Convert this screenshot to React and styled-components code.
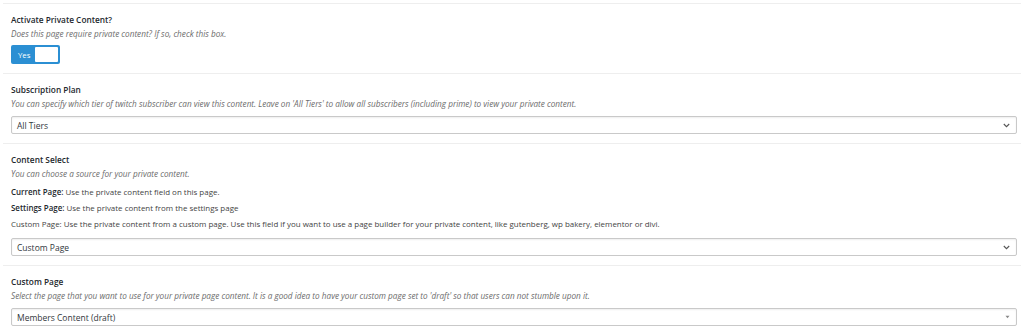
import styled, { createGlobalStyle } from "styled-components";

const GlobalStyle = createGlobalStyle`
  body {
    margin: 0;
    background: #fff;
    font-family: "Open Sans", "Liberation Sans", sans-serif;
    color: #444;
  }
`;

const Panel = styled.div`
  margin: 3px 3px 0;
  border-top: 1px solid #eee;
`;

const Section = styled.div`
  padding: 10px 4px 9px 8px;
  border-bottom: 1px solid #eee;
  display: flex;
  flex-direction: column;
`;

const Heading = styled.h4`
  margin: 0;
  font-size: 8.3px;
  line-height: 11px;
  font-weight: 600;
  color: #23282d;
`;

const Description = styled.p`
  margin: 3px 0 0;
  font-size: 8.2px;
  line-height: 11px;
  font-style: italic;
  color: #6c6c6c;
`;

const Line = styled.p`
  margin: ${({ first }) => (first ? "8px" : "5px")} 0 0;
  font-size: 7.95px;
  line-height: 11px;
  color: #444;

  b {
    font-weight: 600;
    color: #23282d;
  }
`;

const Toggle = styled.div`
  margin-top: 6px;
  width: 49px;
  height: 19px;
  box-sizing: border-box;
  padding: 2px;
  border-radius: 2px;
  background: #2b8fd3;
  display: flex;
  align-items: center;
  justify-content: space-between;
`;

const ToggleLabel = styled.span`
  padding-left: 5px;
  font-size: 7.8px;
  color: #fff;
`;

const Knob = styled.span`
  width: 23px;
  height: 15px;
  border-radius: 1px;
  background: #fff;
`;

const SelectBox = styled.div`
  margin-top: ${({ gap }) => gap || 7}px;
  height: 18px;
  box-sizing: border-box;
  border: 1px solid #c9c9c9;
  border-radius: 2px;
  box-shadow: inset 0 1px 2px rgba(0, 0, 0, 0.07);
  padding: 0 6px 0 5px;
  display: flex;
  align-items: center;
  justify-content: space-between;
  font-size: 8.5px;
  color: #32373c;
`;

const Chevron = () => (
  <svg width="7" height="5" viewBox="0 0 7 5">
    <path d="M0.8 1 L3.5 3.7 L6.2 1" fill="none" stroke="#555" strokeWidth="1.1" />
  </svg>
);

const Caret = () => (
  <svg width="5" height="4" viewBox="0 0 5 4">
    <path d="M0.5 0.8 H4.5 L2.5 3.2 Z" fill="#888" />
  </svg>
);

export default function App() {
  return (
    <>
      <GlobalStyle />
      <Panel>
        <Section>
          <Heading>Activate Private Content?</Heading>
          <Description>Does this page require private content? If so, check this box.</Description>
          <Toggle>
            <ToggleLabel>Yes</ToggleLabel>
            <Knob />
          </Toggle>
        </Section>

        <Section>
          <Heading>Subscription Plan</Heading>
          <Description>
            You can specify which tier of twitch subscriber can view this content. Leave on 'All Tiers' to
            allow all subscribers (including prime) to view your private content.
          </Description>
          <SelectBox>
            <span>All Tiers</span>
            <Chevron />
          </SelectBox>
        </Section>

        <Section>
          <Heading>Content Select</Heading>
          <Description>You can choose a source for your private content.</Description>
          <Line first>
            <b>Current Page:</b> Use the private content field on this page.
          </Line>
          <Line>
            <b>Settings Page:</b> Use the private content from the settings page
          </Line>
          <Line>
            Custom Page: Use the private content from a custom page. Use this field if you want to use a page
            builder for your private content, like gutenberg, wp bakery, elementor or divi.
          </Line>
          <SelectBox gap={8}>
            <span>Custom Page</span>
            <Chevron />
          </SelectBox>
        </Section>

        <Section>
          <Heading>Custom Page</Heading>
          <Description>
            Select the page that you want to use for your private page content. It is a good idea to have your
            custom page set to 'draft' so that users can not stumble upon it.
          </Description>
          <SelectBox>
            <span>Members Content (draft)</span>
            <Caret />
          </SelectBox>
        </Section>
      </Panel>
    </>
  );
}
